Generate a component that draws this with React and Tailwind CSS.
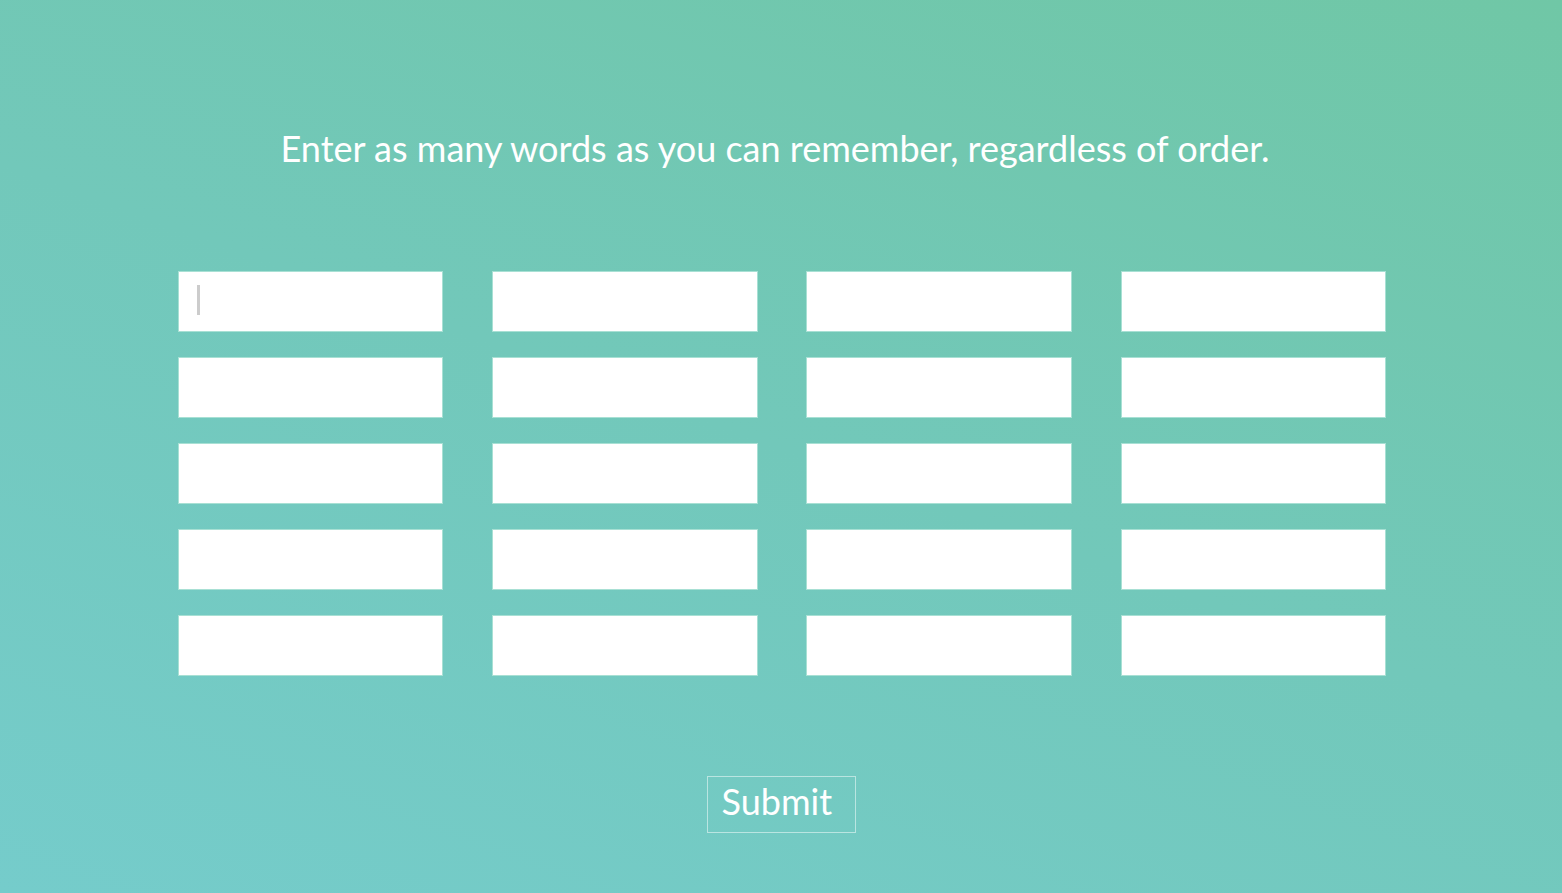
import React from "react";

export default function App() {
  const cells = Array.from({ length: 20 });
  return (
    <div
      className="w-full h-[893px] overflow-hidden bg-[linear-gradient(20deg,#75cccb_0%,#72c8ba_50%,#70c7a6_100%)] flex flex-col items-center"
      style={{ fontFamily: "Lato, 'Open Sans', sans-serif" }}
    >
      <h1 className="mt-[122px] text-[36px] leading-[52px] text-white font-normal tracking-[0px] mr-[12px]">
        Enter as many words as you can remember, regardless of order.
      </h1>
      <div className="mt-[97px] ml-[2px] grid grid-cols-[repeat(4,265.5px)] gap-x-[48.8px] gap-y-[25px]">
        {cells.map((_, i) => (
          <div key={i} className="relative">
            <input
              type="text"
              className="block w-[265.5px] h-[61px] bg-white border border-[#a8e0d4] outline-none px-4 text-[24px] text-gray-700"
            />
            {i === 0 && (
              <span className="absolute left-[19px] top-[14px] w-[3px] h-[30px] bg-[#cccccc]" />
            )}
          </div>
        ))}
      </div>
      <button className="mt-[100px] w-[149px] h-[57px] border border-white/50 text-white text-[36px] leading-none pl-[14px] pr-[22px] pb-[7px] text-left">
        Submit
      </button>
    </div>
  );
}
